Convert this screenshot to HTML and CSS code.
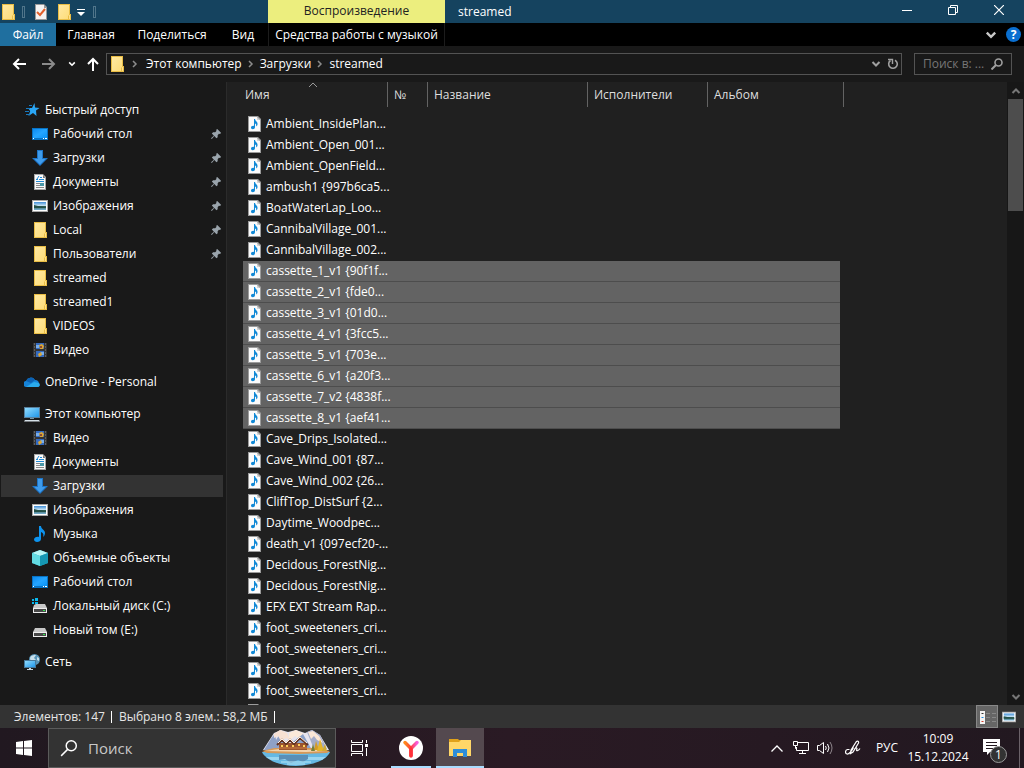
FILE: index.html
```html
<!DOCTYPE html>
<html lang="ru">
<head>
  <meta charset="UTF-8">
  <meta name="viewport" content="width=device-width, initial-scale=1.0">
  <title>streamed</title>
  <link rel="stylesheet" href="styles.css">
</head>
<body>
  <svg class="sprite" aria-hidden="true">
    <defs>
      <linearGradient id="gFolder" x1="0" y1="0" x2="1" y2="1"><stop offset="0" stop-color="#ffe9a2"/><stop offset="1" stop-color="#fddc79"/></linearGradient>
      <linearGradient id="gBlue" x1="0" y1="0" x2="1" y2="1"><stop offset="0" stop-color="#0c8af0"/><stop offset=".5" stop-color="#25a5ff"/><stop offset="1" stop-color="#0a93f5"/></linearGradient>
      <linearGradient id="gScreen" x1="0" y1="0" x2="1" y2="1"><stop offset="0" stop-color="#8fdcff"/><stop offset="1" stop-color="#2197ea"/></linearGradient>
      <linearGradient id="gSky" x1="0" y1="0" x2="0" y2="1"><stop offset="0" stop-color="#3f8ed8"/><stop offset=".5" stop-color="#d3ebf7"/><stop offset=".55" stop-color="#2d5c50"/><stop offset="1" stop-color="#7db6da"/></linearGradient>
      <linearGradient id="gY" x1="0" y1="0" x2="1" y2="0"><stop offset="0" stop-color="#ff8a1c"/><stop offset=".5" stop-color="#ff3d3d"/><stop offset="1" stop-color="#f95fe0"/></linearGradient>
    </defs>
    <symbol id="folder" viewBox="0 0 16 16"><path d="M2 0h12v10h1v6H2z" fill="#e9bd45"/><path d="M3 1h10v10l-1 1v3H3z" fill="url(#gFolder)"/><path d="M13 11h1v4h-1z" fill="#ffe08a"/></symbol>
    <symbol id="star" viewBox="0 0 16 16"><path d="M10.500 1l.5 4.500 4.500.5-3.500 2.500.5 5.500L9 11l-4.500 3 1.700-5L4 6h4z" fill="#2aa6f5"/><path d="M5 3.500h3M2 6.500h4M1 9.500h4M2 12.500h4" stroke="#1779c0"/></symbol>
    <symbol id="desktop" viewBox="0 0 16 16"><path d="M0 2h16v12H0z" fill="#0873c4"/><path d="M1 3h14v9H1z" fill="url(#gBlue)"/><path d="M1 12.500h1m9 0h1m1 0h2" stroke="#fff"/></symbol>
    <symbol id="down" viewBox="0 0 16 16"><path d="M5 0h6v8h5l-8 8-8-8h5z" fill="#1d75c8"/><path d="M6 1h4v8h3.500L8 14.500 2.500 9H6z" fill="#3f9cec"/></symbol>
    <symbol id="doc" viewBox="0 0 16 16"><path d="M2 0h9l3 3v13H2z" fill="#a7a7a7"/><path d="M3 1h8v3h2v11H3z" fill="#fafafa"/><path d="M11 1v3h2z" fill="#777"/><path d="M4 5.500h2M8 3.500h2M7 5.500h5M4 7.500h8" stroke="#238bd4"/><path d="M5 5l2-3" stroke="#238bd4"/><path d="M4 9.500h4M4 11.500h4M4 13.500h8" stroke="#888"/><path d="M8 9h4v3H8z" fill="#4a98a8"/></symbol>
    <symbol id="image" viewBox="0 0 16 16"><path d="M0 2h16v12H0z" fill="#a9a9a9"/><path d="M1 3h14v10H1z" fill="#fff"/><path d="M2 4h12v8H2z" fill="url(#gSky)"/><path d="M2 7l4 1 8 1v1H2z" fill="#245149"/></symbol>
    <symbol id="video" viewBox="0 0 16 16"><path d="M1 1h14v14H1z" fill="#343434"/><path d="M4 1h8v6H4zM4 9h8v6H4z" fill="#356bc0"/><path d="M4 3h3v3H4zM9 10h3v3H9z" fill="#77adeb"/><path d="M7 3l3-1 2 2-1 3H8zM6 12l3-2 1 3-3 2z" fill="#dba632"/><path d="M8 4h2v2H8z" fill="#8b4b38"/><path d="M2.500 1.500v14M13.500 1.500v14" stroke="#888" stroke-width="1" stroke-dasharray="1 2"/></symbol>
    <symbol id="cloud" viewBox="0 0 16 16"><path d="M3 13a3 3 0 0 1-1-6 5 5 0 0 1 9-1 4 4 0 0 1 4 4 2 2 0 0 1-1 3z" fill="#1683d8"/><path d="M2 7a5 5 0 0 1 9-1L7 9z" fill="#0c62b4"/><path d="M2 13l8-5 5 1c1 1 1.500 3-1 4z" fill="#2aabed"/></symbol>
    <symbol id="pc" viewBox="0 0 16 16"><path d="M0 1h16v11H0z" fill="#587f9c"/><path d="M1 2h14v9H1z" fill="url(#gScreen)"/><path d="M6 12h4v1H6z" fill="#7896a8"/><path d="M1 14h14l1 1.500H0z" fill="#d5e0e7"/></symbol>
    <symbol id="music" viewBox="0 0 16 16"><path d="M7 0h2c0 3 4 4 4 7 0 2-1 3-2 4 1-3 0-4-2-5v7c0 2-2 3-4 3-1.500 0-3-1-3-2.200C2 11.500 4.500 10.500 7 11z" fill="#0d93ee"/></symbol>
    <symbol id="cube" viewBox="0 0 16 16"><path d="M8 0l8 3v10l-8 3-8-3V3z" fill="#22aebd"/><path d="M0 3l8-3 8 3-8 3z" fill="#b7f5f5"/><path d="M0 3l8 3v10l-8-3z" fill="#63dbe2"/><path d="M8 6l8-3v10l-8 3z" fill="#1597b3"/></symbol>
    <symbol id="disk" viewBox="0 0 16 16"><path d="M3 6h10l2 4H1z" fill="#c8c8c8"/><path d="M1 10h14v5H1z" fill="#ededed"/><path d="M2 11h12v3H2z" fill="#484848"/><path d="M11 12h2v1h-2z" fill="#35e650"/></symbol>
    <symbol id="sysdisk" viewBox="0 0 16 16"><path d="M4 6h9l2 4H1l1-3z" fill="#c8c8c8"/><path d="M1 10h14v5H1z" fill="#ededed"/><path d="M2 11h12v3H2z" fill="#484848"/><path d="M11 12h2v1h-2z" fill="#35e650"/><path d="M0 1h2v2H0zM3 0h3v3H3zM0 4h2v2H0zM3 4h3v2H3z" fill="#09b8ee"/></symbol>
    <symbol id="net" viewBox="0 0 16 16"><circle cx="10.500" cy="5.500" r="5.500" fill="#5794b8"/><path d="M6 4c1-3 4-3 6-3l-2 3 2 2-2 3c-3-1-4-3-4-5zM13 3l2 1v3l-2-1z" fill="#c8dfea"/><path d="M0 6h12v8H0z" fill="#46799c"/><path d="M1 7h10v6H1z" fill="url(#gScreen)"/><path d="M5 14h2v1H5zM3 15h6v1H3z" fill="#c8d8e2"/></symbol>
    <symbol id="audio" viewBox="0 0 16 16"><path d="M1 0h10l3 3v13H1z" fill="#9c9c9c"/><path d="M2 1h8v3h3v11H2z" fill="#fbfbfb"/><path d="M10 1l3 3h-3z" fill="#d4d4d4"/><path d="M7 3h1c0 2 3 2.500 2.500 5.500-.2 1-.7 1.500-1.500 2 .5-2 0-2.500-1-3V11c0 1.500-1 2.200-2.200 2.200S4 12.500 4 11.500 5.500 9.500 7 10z" fill="#1189d6"/></symbol>
    <symbol id="pin" viewBox="0 0 12 12"><path d="M7.500 0L12 4.500 11 6l-1.500-.3L8 7.500 8 10 6.500 11 4 8.500 1 12l-1-1 3.500-3L1 5.500 2.500 4H5l1.500-1.500L6.300 1z" fill="#9aa4ac"/></symbol>
    <symbol id="chev" viewBox="0 0 10 10"><path d="M1.500 3L5 6.500 8.500 3" fill="none" stroke="currentColor" stroke-width="2"/></symbol>
    <symbol id="sep" viewBox="0 0 10 10"><path d="M3 2l3 3-3 3" fill="none" stroke="currentColor" stroke-width="1.500"/></symbol>
    <symbol id="lens" viewBox="0 0 16 16"><circle cx="10" cy="6" r="4.500" fill="none" stroke="currentColor" stroke-width="1.300"/><path d="M7 9l-6 6" stroke="currentColor" stroke-width="1.300"/></symbol>
    <symbol id="lens-bold" viewBox="0 0 12 12"><circle cx="7.500" cy="4.500" r="3.500" fill="none" stroke="currentColor" stroke-width="1.600"/><path d="M5 7l-4.500 4.500" stroke="currentColor" stroke-width="2"/></symbol>
  </svg>

  <header class="titlebar">
    <div class="quickbar">
      <svg class="icon"><use href="#folder"/></svg>
      <span class="divider"></span>
      <button class="quick" aria-label="Свойства"><svg class="icon" viewBox="0 0 16 16"><path d="M2 0h9l3 3v13H2z" fill="#999"/><path d="M3 1h8v3h2v11H3z" fill="#f5f3f3"/><path d="M4 8l3 3 5-6" fill="none" stroke="#e3602c" stroke-width="2"/></svg></button>
      <button class="quick" aria-label="Новая папка"><svg class="icon"><use href="#folder"/></svg></button>
      <button class="quick-more" aria-label="Настройка панели"><svg width="8" height="8" viewBox="0 0 8 8"><path d="M0 1.500h8" stroke="#fff"/><path d="M0 4h8L4 8z" fill="#fff"/></svg></button>
      <span class="divider"></span>
    </div>
    <div class="context-title">Воспроизведение</div>
    <div class="window-title">streamed</div>
    <div class="window-buttons">
      <button aria-label="Свернуть"><svg width="10" height="10"><path d="M0 5.500h10" stroke="#fff"/></svg></button>
      <button aria-label="Восстановить"><svg width="10" height="10"><path d="M.5 2.500h7v7h-7zM2.500 2.500v-2h7v7h-2" fill="none" stroke="#fff"/></svg></button>
      <button aria-label="Закрыть"><svg width="10" height="10"><path d="M0 0l10 10M10 0L0 10" stroke="#fff" stroke-width="1.200"/></svg></button>
    </div>
  </header>

  <div class="ribbon">
    <button class="file-tab">Файл</button>
    <button>Главная</button>
    <button>Поделиться</button>
    <button>Вид</button>
    <button class="context-tab">Средства работы с музыкой</button>
    <div class="ribbon-tools">
      <button aria-label="Развернуть ленту"><svg width="12" height="12"><use href="#chev"/></svg></button>
      <button class="help" aria-label="Справка">?</button>
    </div>
  </div>

  <div class="addressbar">
    <div class="history">
      <button aria-label="Назад"><svg width="14" height="12" viewBox="0 0 14 12"><path d="M14 6H2M7 1L2 6l5 5" fill="none" stroke="#fff" stroke-width="2"/></svg></button>
      <button aria-label="Вперед"><svg width="14" height="12" viewBox="0 0 14 12"><path d="M0 6h12M7 1l5 5-5 5" fill="none" stroke="#8b8b8b" stroke-width="2"/></svg></button>
      <button aria-label="Последние"><svg width="8" height="8"><use href="#chev"/></svg></button>
      <button aria-label="Вверх"><svg width="12" height="14" viewBox="0 0 12 14"><path d="M6 14V2M1 7l5-5 5 5" fill="none" stroke="#fff" stroke-width="2"/></svg></button>
    </div>
    <nav class="path">
      <svg class="icon"><use href="#folder"/></svg>
      <svg class="arrow"><use href="#sep"/></svg>
      <button>Этот компьютер</button>
      <svg class="arrow"><use href="#sep"/></svg>
      <button>Загрузки</button>
      <svg class="arrow"><use href="#sep"/></svg>
      <button>streamed</button>
      <div class="path-tools">
        <button aria-label="Предыдущие расположения"><svg width="10" height="10"><use href="#chev"/></svg></button>
        <button aria-label="Обновить"><svg width="12" height="12" viewBox="0 0 12 12"><path d="M8 2.200a4.300 4.300 0 1 1-4.500.3" fill="none" stroke="currentColor" stroke-width="1.600"/><path d="M1 1.500h4.500V6" fill="none" stroke="currentColor" stroke-width="1.400"/></svg></button>
      </div>
    </nav>
    <label class="search">
      <input type="text" placeholder="Поиск в: ..." aria-label="Поиск в: streamed">
      <svg width="12" height="12"><use href="#lens-bold"/></svg>
    </label>
  </div>

  <main class="explorer">
    <nav class="sidebar">
      <ul>
        <li class="root"><a href="#"><svg class="icon"><use href="#star"/></svg>Быстрый доступ</a></li>
        <li><a href="#"><svg class="icon"><use href="#desktop"/></svg>Рабочий стол<svg class="pin"><use href="#pin"/></svg></a></li>
        <li><a href="#"><svg class="icon"><use href="#down"/></svg>Загрузки<svg class="pin"><use href="#pin"/></svg></a></li>
        <li><a href="#"><svg class="icon"><use href="#doc"/></svg>Документы<svg class="pin"><use href="#pin"/></svg></a></li>
        <li><a href="#"><svg class="icon"><use href="#image"/></svg>Изображения<svg class="pin"><use href="#pin"/></svg></a></li>
        <li><a href="#"><svg class="icon"><use href="#folder"/></svg>Local<svg class="pin"><use href="#pin"/></svg></a></li>
        <li><a href="#"><svg class="icon"><use href="#folder"/></svg>Пользователи<svg class="pin"><use href="#pin"/></svg></a></li>
        <li><a href="#"><svg class="icon"><use href="#folder"/></svg>streamed</a></li>
        <li><a href="#"><svg class="icon"><use href="#folder"/></svg>streamed1</a></li>
        <li><a href="#"><svg class="icon"><use href="#folder"/></svg>VIDEOS</a></li>
        <li><a href="#"><svg class="icon"><use href="#video"/></svg>Видео</a></li>
      </ul>
      <ul>
        <li class="root"><a href="#"><svg class="icon"><use href="#cloud"/></svg>OneDrive - Personal</a></li>
      </ul>
      <ul>
        <li class="root"><a href="#"><svg class="icon"><use href="#pc"/></svg>Этот компьютер</a></li>
        <li><a href="#"><svg class="icon"><use href="#video"/></svg>Видео</a></li>
        <li><a href="#"><svg class="icon"><use href="#doc"/></svg>Документы</a></li>
        <li class="current"><a href="#"><svg class="icon"><use href="#down"/></svg>Загрузки</a></li>
        <li><a href="#"><svg class="icon"><use href="#image"/></svg>Изображения</a></li>
        <li><a href="#"><svg class="icon"><use href="#music"/></svg>Музыка</a></li>
        <li><a href="#"><svg class="icon"><use href="#cube"/></svg>Объемные объекты</a></li>
        <li><a href="#"><svg class="icon"><use href="#desktop"/></svg>Рабочий стол</a></li>
        <li><a href="#"><svg class="icon"><use href="#sysdisk"/></svg>Локальный диск (C:)</a></li>
        <li><a href="#"><svg class="icon"><use href="#disk"/></svg>Новый том (E:)</a></li>
      </ul>
      <ul>
        <li class="root"><a href="#"><svg class="icon"><use href="#net"/></svg>Сеть</a></li>
      </ul>
    </nav>

    <section class="files">
      <table>
        <colgroup><col class="c-name"><col class="c-num"><col class="c-title"><col class="c-artist"><col class="c-album"></colgroup>
        <thead>
          <tr>
            <th><div>Имя<svg class="sort" viewBox="0 0 10 6"><path d="M1 5l4-4 4 4" fill="none" stroke="#999"/></svg></div></th>
            <th><div>№</div></th><th><div>Название</div></th><th><div>Исполнители</div></th><th><div>Альбом</div></th>
          </tr>
        </thead>
        <tbody>
          <tr><td><svg class="icon"><use href="#audio"/></svg>Ambient_InsidePlan...</td><td></td><td></td><td></td><td></td></tr>
          <tr><td><svg class="icon"><use href="#audio"/></svg>Ambient_Open_001...</td><td></td><td></td><td></td><td></td></tr>
          <tr><td><svg class="icon"><use href="#audio"/></svg>Ambient_OpenField...</td><td></td><td></td><td></td><td></td></tr>
          <tr><td><svg class="icon"><use href="#audio"/></svg>ambush1 {997b6ca5...</td><td></td><td></td><td></td><td></td></tr>
          <tr><td><svg class="icon"><use href="#audio"/></svg>BoatWaterLap_Loo...</td><td></td><td></td><td></td><td></td></tr>
          <tr><td><svg class="icon"><use href="#audio"/></svg>CannibalVillage_001...</td><td></td><td></td><td></td><td></td></tr>
          <tr><td><svg class="icon"><use href="#audio"/></svg>CannibalVillage_002...</td><td></td><td></td><td></td><td></td></tr>
          <tr class="selected"><td><svg class="icon"><use href="#audio"/></svg>cassette_1_v1 {90f1f...</td><td></td><td></td><td></td><td></td></tr>
          <tr class="selected"><td><svg class="icon"><use href="#audio"/></svg>cassette_2_v1 {fde0...</td><td></td><td></td><td></td><td></td></tr>
          <tr class="selected"><td><svg class="icon"><use href="#audio"/></svg>cassette_3_v1 {01d0...</td><td></td><td></td><td></td><td></td></tr>
          <tr class="selected"><td><svg class="icon"><use href="#audio"/></svg>cassette_4_v1 {3fcc5...</td><td></td><td></td><td></td><td></td></tr>
          <tr class="selected"><td><svg class="icon"><use href="#audio"/></svg>cassette_5_v1 {703e...</td><td></td><td></td><td></td><td></td></tr>
          <tr class="selected"><td><svg class="icon"><use href="#audio"/></svg>cassette_6_v1 {a20f3...</td><td></td><td></td><td></td><td></td></tr>
          <tr class="selected"><td><svg class="icon"><use href="#audio"/></svg>cassette_7_v2 {4838f...</td><td></td><td></td><td></td><td></td></tr>
          <tr class="selected"><td><svg class="icon"><use href="#audio"/></svg>cassette_8_v1 {aef41...</td><td></td><td></td><td></td><td></td></tr>
          <tr><td><svg class="icon"><use href="#audio"/></svg>Cave_Drips_Isolated...</td><td></td><td></td><td></td><td></td></tr>
          <tr><td><svg class="icon"><use href="#audio"/></svg>Cave_Wind_001 {87...</td><td></td><td></td><td></td><td></td></tr>
          <tr><td><svg class="icon"><use href="#audio"/></svg>Cave_Wind_002 {26...</td><td></td><td></td><td></td><td></td></tr>
          <tr><td><svg class="icon"><use href="#audio"/></svg>CliffTop_DistSurf {2...</td><td></td><td></td><td></td><td></td></tr>
          <tr><td><svg class="icon"><use href="#audio"/></svg>Daytime_Woodpec...</td><td></td><td></td><td></td><td></td></tr>
          <tr><td><svg class="icon"><use href="#audio"/></svg>death_v1 {097ecf20-...</td><td></td><td></td><td></td><td></td></tr>
          <tr><td><svg class="icon"><use href="#audio"/></svg>Decidous_ForestNig...</td><td></td><td></td><td></td><td></td></tr>
          <tr><td><svg class="icon"><use href="#audio"/></svg>Decidous_ForestNig...</td><td></td><td></td><td></td><td></td></tr>
          <tr><td><svg class="icon"><use href="#audio"/></svg>EFX EXT Stream Rap...</td><td></td><td></td><td></td><td></td></tr>
          <tr><td><svg class="icon"><use href="#audio"/></svg>foot_sweeteners_cri...</td><td></td><td></td><td></td><td></td></tr>
          <tr><td><svg class="icon"><use href="#audio"/></svg>foot_sweeteners_cri...</td><td></td><td></td><td></td><td></td></tr>
          <tr><td><svg class="icon"><use href="#audio"/></svg>foot_sweeteners_cri...</td><td></td><td></td><td></td><td></td></tr>
          <tr><td><svg class="icon"><use href="#audio"/></svg>foot_sweeteners_cri...</td><td></td><td></td><td></td><td></td></tr>
          <tr><td><svg class="icon"><use href="#audio"/></svg></td><td></td><td></td><td></td><td></td></tr>
        </tbody>
      </table>
    </section>
    <div class="scrollbar">
      <button aria-label="Прокрутить вверх"><svg class="flip" width="10" height="10"><use href="#chev"/></svg></button>
      <div class="track"><div class="thumb"></div></div>
      <button aria-label="Прокрутить вниз"><svg width="10" height="10"><use href="#chev"/></svg></button>
    </div>
  </main>

  <footer class="statusbar">
    <span>Элементов: 147</span>
    <span>Выбрано 8 элем.: 58,2 МБ</span>
    <div class="views">
      <button class="active" aria-label="Таблица"><svg width="20" height="16" viewBox="0 0 20 16"><path d="M3 2h5v13H3z" fill="#f4f4f4"/><path d="M4.500 4h2v1h-2z" fill="#333"/><path d="M4.500 8h2v1h-2z" fill="#1a8ae0"/><path d="M4.500 12h2v1h-2z" fill="#d03a2a"/><path d="M9 4.500h4m2 0h4M9 8.500h4m2 0h4M9 12.500h4m2 0h4" stroke="#888"/></svg></button>
      <button aria-label="Крупные значки"><svg width="14" height="14"><use href="#image"/></svg></button>
    </div>
  </footer>

  <div class="taskbar">
    <button class="start" aria-label="Пуск"><svg width="16" height="16" viewBox="0 0 16 16"><path d="M0 2l7-1v6.500H0zM8 .9L16 0v7.500H8zM0 8.500h7V15l-7-1zM8 8.500h8V16l-8-.9z" fill="#fff"/></svg></button>
    <label class="task-search">
      <svg width="18" height="18"><use href="#lens"/></svg>
      <input type="text" placeholder="Поиск" aria-label="Поиск">
      <svg class="scene" width="70" height="38" viewBox="0 0 70 38">
        <path d="M2 21L13 4l7-3 7 2 8-2 9 3 7-3 8 5 9 15z" fill="#e6e4ee"/>
        <path d="M3 21l8-13 3-3 1 6 4-6 8 16z" fill="#8fa1c6"/>
        <path d="M13 5l6-4 7 3 3 7-4-2-5 3-3-5-4 2z" fill="#f7e1d3"/>
        <path d="M28 4l7-3 8 4-5 5-4-3-6 5z" fill="#fbe9d9"/>
        <path d="M32 13l10-8 9 16H31z" fill="#8aa0c8"/>
        <path d="M46 3l5-2 8 5 7 14H53z" fill="#a3acc9"/>
        <path d="M47 3l5-1 6 5 4 7-6-3-3-4-3 3z" fill="#fae6d6"/>
        <path d="M1 23h68c-2 5-11 13-34 14C14 37 3 28 1 23z" fill="#65b9e4"/>
        <path d="M5 28h60l-4 3H10z" fill="#99d5f0"/>
        <path d="M18 26h29v4l-5 3-5-2-7 3-6-4-6 1z" fill="#598fb7"/>
        <path d="M20 33h30M26 35h18" stroke="#b9e6f5"/>
        <path d="M1 22l12-3h42l14 3-3 2-28 1-32-1z" fill="#d69958"/>
        <path d="M4 22l14-2 39 1 8 1-20 1z" fill="#f4d4ac"/>
        <path d="M18 14h28v7H18z" fill="#9b542e"/>
        <path d="M16 16l5-5 4 4 4-4 4 4 6-6 8 7" fill="none" stroke="#623323" stroke-width="2"/>
        <path d="M17 14l4-4 4 4 4-4 4 4 6-6 7 6" fill="none" stroke="#fff0e0"/>
        <path d="M20 16h2v2h-2zM25 16h2v2h-2zM31 16h2v2h-2zM37 15h2v2h-2zM42 16h2v2h-2z" fill="#ffd05a"/>
        <path d="M18 19h28" stroke="#d18244"/>
        <path d="M53 21l2-9 3 9z" fill="#d49b24"/><path d="M56 22l3-12 4 12z" fill="#e4b52c"/><path d="M50 22l2-7 2 7z" fill="#73803c"/><path d="M61 22l3-7 2 7z" fill="#cfaa36"/>
      </svg>
    </label>
    <button class="task" aria-label="Представление задач"><svg width="18" height="16" viewBox="0 0 18 16"><path d="M.5 0v2.500h11V0M.5 4.500h11v7H.5zM.5 16v-2.500h11V16M15.500 0v3M15.500 8v8" fill="none" stroke="#fff"/><path d="M14 4h3v3h-3z" fill="#fff"/></svg></button>
    <button class="task running" aria-label="Яндекс Браузер"><svg width="24" height="24" viewBox="0 0 24 24"><circle cx="12" cy="12" r="12" fill="#fff"/><path d="M6 6.500l6 6 6-6M12 12.500V20" fill="none" stroke="url(#gY)" stroke-width="3.500" stroke-linecap="round"/><path d="M12 13v6.500" stroke="#ff3039" stroke-width="3.500" stroke-linecap="round"/></svg></button>
    <button class="task running focused" aria-label="Проводник"><svg width="22" height="18" viewBox="0 0 22 18"><path d="M0 0h9l1 1h11v16H0z" fill="#e0a21a"/><path d="M0 3h10l2-2h10v16H0z" fill="#ffd768"/><path d="M4 10h14v8h-4v-4H8v4H4z" fill="#2f8ed8"/></svg></button>
    <div class="tray">
      <button aria-label="Скрытые значки"><svg width="12" height="7" viewBox="0 0 12 7"><path d="M.5 6.500L6 1l5.500 5.500" fill="none" stroke="#fff" stroke-width="1.300"/></svg></button>
      <button aria-label="Сеть"><svg width="16" height="14" viewBox="0 0 16 14"><path d="M5 1.500h10.500v8H3.500V6M9.500 9.500v3M6 12.500h7M.5.5h4v4h-4zM2.500 4.500v3h1" fill="none" stroke="#fff"/></svg></button>
      <button aria-label="Громкость"><svg width="16" height="14" viewBox="0 0 16 14"><path d="M.5 4.500h2l4-3v11l-4-3h-2zM8.500 5q1.500 2 0 4M10.500 3q3 4 0 8" fill="none" stroke="#fff"/><path d="M13 1q4 6 0 12" fill="none" stroke="#8d858b"/></svg></button>
      <button class="pen" aria-label="Рукописный ввод"><svg width="16" height="16" viewBox="0 0 16 16"><path d="M6 10l5.500-8.500c1-1 2.500 0 2 1.500L8 12l-2.500 1.500zM4.500 9.500H2.500C0 10 0 13.500 2 14c3 .5 5-4 6.500-6.500M9.500 9c2-2 3-1 2 1 0 1.500 2 .5 3.500-1.500" fill="none" stroke="#fff" stroke-width="1.200"/></svg></button>
      <button class="lang">РУС</button>
      <button class="clock">10:09<br>15.12.2024</button>
      <button class="notify" aria-label="Уведомления"><svg width="26" height="26" viewBox="0 0 26 26"><path d="M0 1h17v13H7l-3 3v-3H0z" fill="#fff"/><path d="M3 4.500h11M3 7.500h11M3 10.500h8" stroke="#241a21"/></svg><span class="badge">1</span></button>
      <button class="show-desktop" aria-label="Свернуть все окна"></button>
    </div>
  </div>
</body>
</html>
```
FILE: styles.css
```css
* { box-sizing: border-box; }
body { margin: 0; height: 100vh; display: flex; flex-direction: column; overflow: hidden; background: #191919; color: #fff; font-family: "Open Sans", "Noto Sans", sans-serif; font-size: 12px; line-height: 16px; }
button { display: flex; align-items: center; justify-content: center; padding: 0; border: none; background: none; color: inherit; font: inherit; white-space: nowrap; }
input { min-width: 0; padding: 0; border: none; outline: none; background: none; color: #fff; font: inherit; }
svg { display: block; flex: none; }
.sprite { position: absolute; width: 0; height: 0; }
.icon { width: 16px; height: 16px; }

/* title bar and ribbon tabs share the same columns */
.titlebar { flex: none; height: 23px; display: grid; grid-template-columns: 268px 177px 1fr auto; background: #15435f; }
.quickbar { display: flex; align-items: center; }
.divider { width: 3px; height: 12px; margin: 0 4px 0 6px; border: 1px solid #50758a; }
.quick { width: 23px; }
.quick-more { width: 12px; }
.context-title { display: flex; align-items: center; justify-content: center; padding-bottom: 2px; background: #ecee7e; color: #222; }
.window-title { display: flex; align-items: center; padding-left: 13px; }
.window-buttons { display: flex; padding-right: 2px; }
.window-buttons button { width: 46px; padding-bottom: 3px; }

.ribbon { flex: none; height: 23px; display: grid; grid-template-columns: 56px 70px 92px 50px 177px 1fr; background: #000; }
.file-tab { background: #1f6f9f; }
.context-tab { border-left: 1px solid #1c1c1c; border-right: 1px solid #1c1c1c; }
.ribbon-tools { display: flex; justify-content: flex-end; align-items: center; gap: 9px; padding-right: 3px; color: #c8c8c8; }
.help { width: 15px; height: 15px; border-radius: 50%; background: #0a6fd0; color: #fff; font-weight: bold; }

.addressbar { flex: none; height: 36px; display: flex; align-items: center; gap: 12px; padding-right: 12px; }
.history { width: 94px; display: grid; grid-template-columns: 38px 22px 24px 18px; }
.path { flex: 1; height: 22px; display: flex; align-items: center; padding-left: 2px; border: 1px solid #535353; }
.arrow { width: 10px; height: 10px; margin: 0 4px; color: #8c8c8c; }
.icon + .arrow { margin: 0 6px 0 5px; }
.path-tools { margin-left: auto; display: flex; color: #a0a0a0; }
.path-tools button { width: 17px; }
.search { width: 98px; height: 22px; display: flex; align-items: center; padding: 0 8px; border: 1px solid #535353; color: #a0a0a0; }
.search input { flex: 1; }
.search input::placeholder { color: #767676; opacity: 1; }

.explorer { flex: 1; min-height: 0; display: flex; }
.sidebar { flex: none; width: 227px; padding-top: 16px; border-right: 1px solid #2b2b2b; overflow: hidden; }
.sidebar ul { margin: 0 3px 8px 1px; padding: 0; list-style: none; }
.sidebar a { height: 24px; display: flex; align-items: center; gap: 5px; padding: 0 2px 0 31px; color: #fff; text-decoration: none; white-space: nowrap; }
.sidebar .root a { padding-left: 23px; }
.sidebar .current a { height: 22px; margin: 1px 0; background: #333; }
.pin { width: 10px; height: 10px; margin-left: auto; }

.files { flex: 1; min-width: 0; overflow: hidden; padding-left: 16px; background: #202020; }
.files table { width: 601px; table-layout: fixed; border-collapse: separate; border-spacing: 0; }
.c-name { width: 145px; }
.c-num { width: 40px; }
.c-title { width: 160px; }
.c-artist { width: 120px; }
.c-album { width: 136px; }
.files th { padding: 0 0 7px; font-weight: normal; text-align: left; color: #dedede; }
.files th div { position: relative; height: 25px; padding: 5px 0 0 6px; border-right: 1px solid #636363; }
.files th:first-child div { padding-left: 2px; }
.sort { position: absolute; top: 0; left: 65px; width: 10px; height: 6px; }
.files td { height: 21px; padding: 0; white-space: nowrap; }
.files td:first-child { display: flex; align-items: center; gap: 3px; padding: 0 0 2px 4px; }
.files td:last-child { border-right: 4px solid #202020; }
.selected td { background: #636363; box-shadow: inset 0 -1px #4d4d4d; }

.scrollbar { flex: none; width: 17px; display: flex; flex-direction: column; background: #171717; color: #777; }
.scrollbar button { height: 17px; }
.flip { transform: rotate(180deg); }
.track { flex: 1; padding: 0 1px; }
.thumb { height: 19%; background: #4d4d4d; }

.statusbar { flex: none; height: 23px; display: flex; align-items: center; padding-left: 14px; background: #333; color: #e6e6e6; }
.statusbar span { line-height: 12px; padding-right: 6px; margin-right: 7px; border-right: 1px solid #fff; white-space: nowrap; }
.views { height: 23px; margin-left: auto; display: flex; padding-right: 4px; }
.views button { width: 22px; }
.views .active { background: #666; border: 1px solid #888; }

.taskbar { flex: none; height: 40px; display: flex; background: linear-gradient(90deg, #211820, #2a1a24 50%, #221820); }
.start { width: 48px; }
.task-search { width: 288px; display: flex; align-items: center; gap: 10px; padding: 0 4px 0 11px; border: 1px solid #5b5b5b; background: #333; }
.task-search input { flex: 1; font-size: 15px; line-height: 20px; }
.task-search input::placeholder { color: #c8c8c8; opacity: 1; }
.task { width: 48px; }
.running { width: 40px; margin: 0 5px 0 7px; padding-top: 2px; border-bottom: 2px solid #a9dcff; }
.focused { width: 48px; margin: 0; background: #54494f; }
.tray { margin-left: auto; display: flex; align-items: stretch; }
.tray button { width: 24px; }
.tray .pen { width: 32px; }
.tray .lang { width: 36px; }
.tray .clock { width: 66px; margin-right: 3px; line-height: 18px; }
.tray .notify { position: relative; width: 44px; padding-top: 5px; }
.tray .show-desktop { width: 5px; margin-left: 1px; border-left: 1px solid #6b6269; }
.badge { position: absolute; right: 11px; bottom: 5px; width: 17px; height: 17px; border: 1px solid #999; border-radius: 50%; background: #333; line-height: 15px; }
```
